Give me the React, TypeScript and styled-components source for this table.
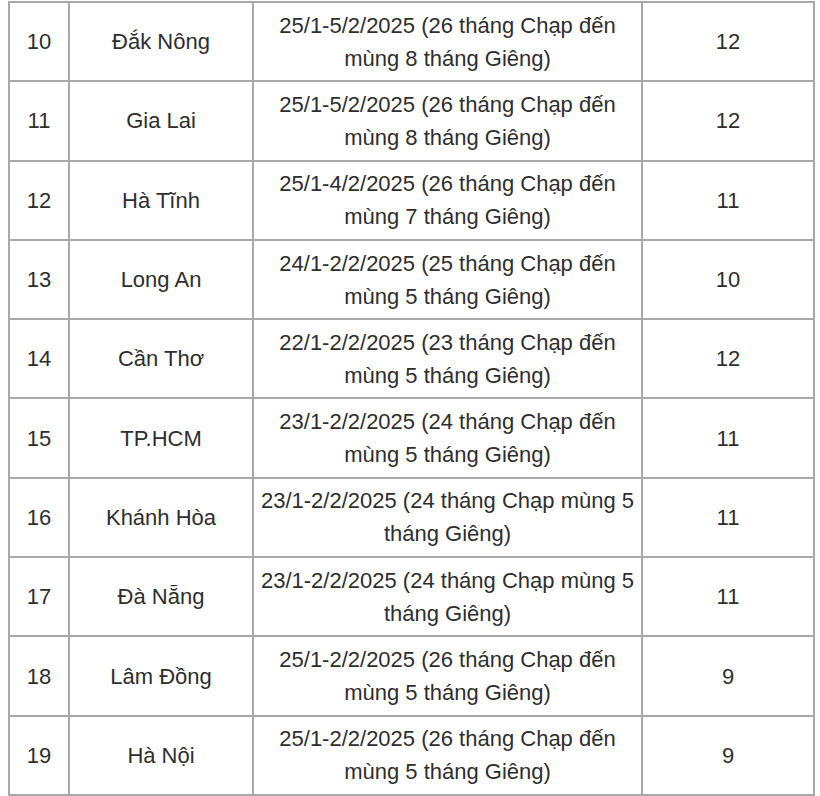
import { createGlobalStyle } from 'styled-components'
import styled from 'styled-components'

const GlobalStyle = createGlobalStyle`
    html, body {
        margin: 0;
        padding: 0;
        background: #fff;
    }
`

const Wrapper = styled.div`
    padding: 1px 0 0 8px;
    width: 808px;
`

const Table = styled.table`
    width: 807px;
    border-collapse: collapse;
    table-layout: fixed;
    font-family: 'Liberation Sans', Arial, sans-serif;
    font-size: 22px;
    line-height: 33px;
    color: #2e2e2e;
`

const Col = styled.col<{ $w: number }>`
    width: ${({ $w }) => $w}px;
`

const Cell = styled.td`
    border: 2px solid #a8a8a8;
    text-align: center;
    vertical-align: middle;
    height: 79.3px;
    padding: 0 5px;
    box-sizing: border-box;
`

type Row = { no: number; place: string; time: string; days: number }

const rows: Row[] = [
    { no: 10, place: 'Đắk Nông', time: '25/1-5/2/2025 (26 tháng Chạp đến mùng 8 tháng Giêng)', days: 12 },
    { no: 11, place: 'Gia Lai', time: '25/1-5/2/2025 (26 tháng Chạp đến mùng 8 tháng Giêng)', days: 12 },
    { no: 12, place: 'Hà Tĩnh', time: '25/1-4/2/2025 (26 tháng Chạp đến mùng 7 tháng Giêng)', days: 11 },
    { no: 13, place: 'Long An', time: '24/1-2/2/2025 (25 tháng Chạp đến mùng 5 tháng Giêng)', days: 10 },
    { no: 14, place: 'Cần Thơ', time: '22/1-2/2/2025 (23 tháng Chạp đến mùng 5 tháng Giêng)', days: 12 },
    { no: 15, place: 'TP.HCM', time: '23/1-2/2/2025 (24 tháng Chạp đến mùng 5 tháng Giêng)', days: 11 },
    { no: 16, place: 'Khánh Hòa', time: '23/1-2/2/2025 (24 tháng Chạp mùng 5 tháng Giêng)', days: 11 },
    { no: 17, place: 'Đà Nẵng', time: '23/1-2/2/2025 (24 tháng Chạp mùng 5 tháng Giêng)', days: 11 },
    { no: 18, place: 'Lâm Đồng', time: '25/1-2/2/2025 (26 tháng Chạp đến mùng 5 tháng Giêng)', days: 9 },
    { no: 19, place: 'Hà Nội', time: '25/1-2/2/2025 (26 tháng Chạp đến mùng 5 tháng Giêng)', days: 9 },
]

export default function App() {
    return (
        <>
            <GlobalStyle />
            <Wrapper>
                <Table>
                    <colgroup>
                        <Col $w={60} />
                        <Col $w={184} />
                        <Col $w={389} />
                        <Col $w={172} />
                    </colgroup>
                    <tbody>
                        {rows.map((r) => (
                            <tr key={r.no}>
                                <Cell>{r.no}</Cell>
                                <Cell>{r.place}</Cell>
                                <Cell>{r.time}</Cell>
                                <Cell>{r.days}</Cell>
                            </tr>
                        ))}
                    </tbody>
                </Table>
            </Wrapper>
        </>
    )
}
